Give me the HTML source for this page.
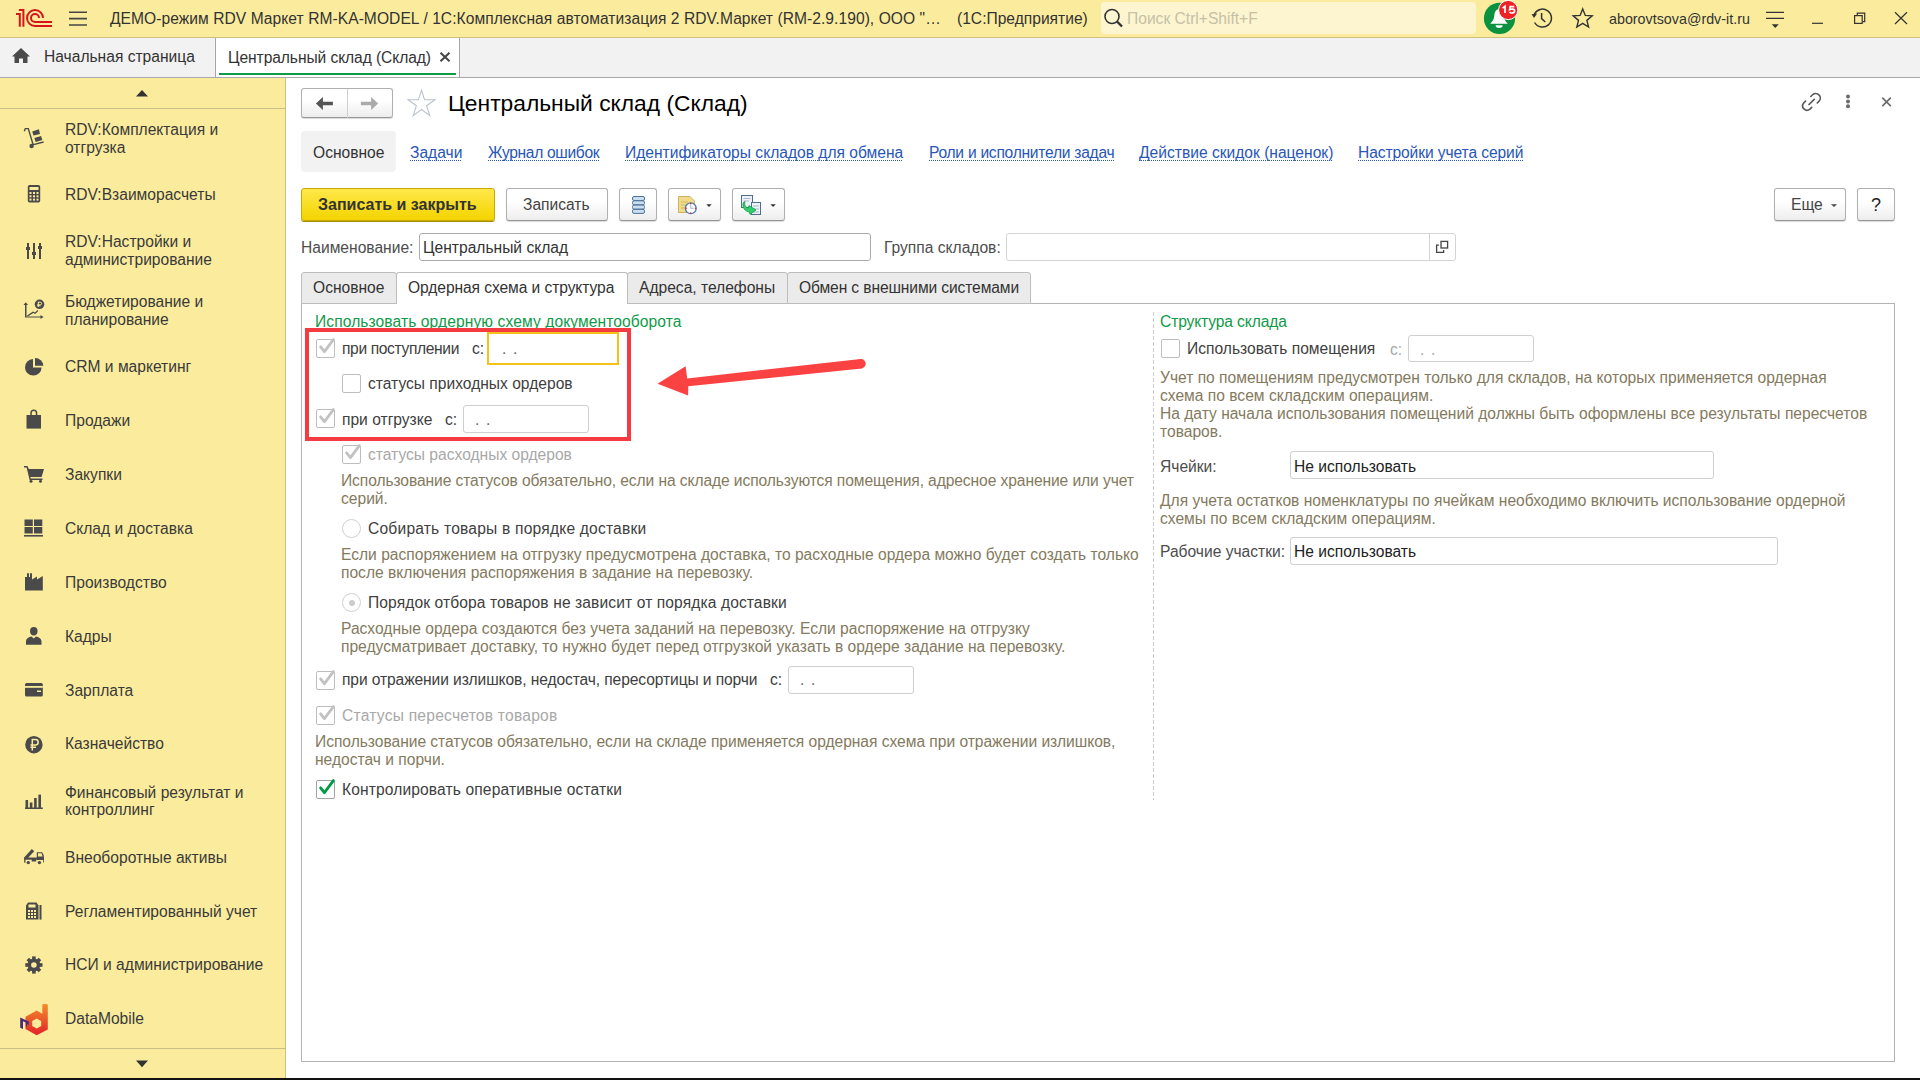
<!DOCTYPE html>
<html><head><meta charset="utf-8"><title>1C</title>
<style>
*{margin:0;padding:0;box-sizing:border-box}
html,body{width:1920px;height:1080px;overflow:hidden;background:#fff}
body{position:relative;font-family:"Liberation Sans",sans-serif;font-size:15.6px;line-height:18px;color:#404040}
.a{position:absolute}
.t{position:absolute;white-space:nowrap;line-height:18px}
svg{position:absolute;overflow:visible}
.side{color:#3a3a3a}
.hint{color:#847a5e}
.grn{color:#0f9a48}
.lnk{color:#2856b6;background-image:repeating-linear-gradient(90deg,#2856b6 0 1px,transparent 1px 2px);background-repeat:no-repeat;background-size:100% 1px;background-position:0 16px}
.dis{color:#a8a8a8}
.btn{position:absolute;border:1px solid #b0b0b0;border-bottom-color:#959595;border-radius:3px;background:linear-gradient(#ffffff 0%,#ffffff 40%,#ededed 100%);box-shadow:0 1px 1px rgba(0,0,0,0.15)}
.fld{position:absolute;border:1px solid #cfcfcf;border-radius:3px;background:#fff}
.cb{position:absolute;width:19px;height:19px;border:1px solid #c4c4c4;border-radius:2px;background:#fff}
</style></head><body>
<div class="a" style="left:0px;top:0px;width:1920px;height:37px;background:#fbec9d"></div>
<div class="a" style="left:0px;top:37px;width:1920px;height:1px;background:#cdbf7c"></div>
<svg style="left:0;top:0" width="60" height="36"><g fill="none" stroke="#d7141a" stroke-width="2">
<path d="M16 14H19.8V26.8"/><path d="M18.9 10.1H23.4V26.8"/>
<path d="M43 18A8 8 0 1 0 35 26H52"/><path d="M39 18A4 4 0 1 0 35 22H52"/></g></svg>
<svg style="left:0;top:0" width="100" height="36"><g stroke="#444" stroke-width="1.6"><path d="M69 12.2H87M69 18.6H87M69 25H87"/></g></svg>
<div class="t " style="left:110.0px;top:9.59px;letter-spacing:0.05px;color:#333">ДЕМО-режим RDV Маркет RM-KA-MODEL / 1С:Комплексная автоматизация 2 RDV.Маркет (RM-2.9.190), ООО "…</div>
<div class="t " style="left:957.0px;top:9.59px;color:#333">(1С:Предприятие)</div>
<div class="a" style="left:1101px;top:2px;width:375px;height:32px;background:#fdf5cf;border-radius:4px"></div>
<svg style="left:0;top:0" width="1200" height="36"><g fill="none" stroke="#333" stroke-width="1.6"><circle cx="1112" cy="16.5" r="7"/><path d="M1117 21.5L1122 26.5" stroke-width="2.4"/></g></svg>
<div class="t " style="left:1127.0px;top:9.59px;color:#c6c0a8">Поиск Ctrl+Shift+F</div>
<svg style="left:0;top:0" width="1920" height="36">
<circle cx="1499.5" cy="18.4" r="15.6" fill="#0b9240"/>
<path d="M1499 9.3C1495.6 9.3 1494.6 12.3 1494.3 15.8C1494 19 1492.6 21.6 1490.2 23.8H1507.8C1505.4 21.6 1504 19 1503.7 15.8C1503.4 12.3 1502.4 9.3 1499 9.3Z" fill="#fff"/>
<path d="M1495.6 25.3H1502.6A3.5 2.6 0 0 1 1495.6 25.3Z" fill="#fff"/>
<circle cx="1508.2" cy="10" r="9.6" fill="#ee2326" stroke="#fff" stroke-width="1"/>
<g fill="none" stroke="#333" stroke-width="1.5">
<path d="M1534.6 22.5A9 9 0 1 0 1534.2 14.5"/>
<path d="M1541.6 13.1V18.6L1545.3 22"/>
<path d="M1582.70 9.00L1585.29 15.44L1592.21 15.91L1586.88 20.36L1588.58 27.09L1582.70 23.40L1576.82 27.09L1578.52 20.36L1573.19 15.91L1580.11 15.44Z" stroke-linejoin="miter" stroke-width="1.4"/>
</g>
<path d="M1531.6 14.2L1537.2 13.6L1534 18Z" fill="#333"/>
<g stroke="#333" stroke-width="1.2" fill="none">
<path d="M1766 12.3H1784M1766 18.3H1784"/>
<path d="M1812 23.3H1823"/>
<path d="M1857.3 15V13.2H1864.7V21.6H1862.7"/>
<rect x="1854.6" y="15.6" width="7.6" height="7.8"/>
<path d="M1895 12.2L1907 24M1907 12.2L1895 24"/>
</g>
<path d="M1771.7 24.2H1778.8L1775.25 27.9Z" fill="#333"/>
</svg>
<svg style="left:0;top:0" width="1" height="1"><g fill="none" stroke="#fff" stroke-width="1.7"><path d="M1502.6 8.2L1505 6.3V13"/><path d="M1514.3 6.7H1510.2L1509.7 9.6C1510.8 9 1514.6 8.7 1514.6 11C1514.6 13.4 1510.8 13.5 1509.5 12"/></g></svg>
<div class="t " style="left:1609.0px;top:11.05px;font-size:14.3px;line-height:16px;color:#333">aborovtsova@rdv-it.ru</div>
<div class="a" style="left:0px;top:38px;width:1920px;height:39px;background:#f2f2f2"></div>
<div class="a" style="left:0px;top:77px;width:1920px;height:1px;background:#a9a9a9"></div>
<div class="a" style="left:215px;top:38px;width:245px;height:39px;background:#fff;border-left:1px solid #a6a6a6;border-right:1px solid #a6a6a6"></div>
<div class="a" style="left:219px;top:73px;width:237px;height:2px;background:#0f9a48"></div>
<svg style="left:0;top:0" width="40" height="80"><path d="M21 48L12 56.5H14.5V63H19V58.5H23V63H27.5V56.5H30Z" fill="#4a4a4a"/></svg>
<div class="t " style="left:44.0px;top:48.09px;color:#333">Начальная страница</div>
<div class="t " style="left:228.0px;top:48.59px;letter-spacing:-0.08px;color:#333">Центральный склад (Склад)</div>
<svg style="left:0;top:0" width="480" height="80"><path d="M440.5 52.7L449.5 61.2M449.5 52.7L440.5 61.2" stroke="#444" stroke-width="2"/></svg>
<div class="a" style="left:0px;top:78px;width:285px;height:1000px;background:#fbec9d"></div>
<div class="a" style="left:285px;top:78px;width:1px;height:1000px;background:#cbbf86"></div>
<div class="a" style="left:0px;top:108px;width:285px;height:1px;background:#c9be88"></div>
<div class="a" style="left:0px;top:1048px;width:285px;height:1px;background:#c9be88"></div>
<svg style="left:0;top:0" width="290" height="1080"><path d="M136 96.5H148L142 90Z" fill="#333"/><path d="M136 1060.5H148L142 1067.3Z" fill="#333"/></svg>
<div class="t side" style="left:65.0px;top:121.09px;">RDV:Комплектация и</div>
<div class="t side" style="left:65.0px;top:138.89px;">отгрузка</div>
<div class="t side" style="left:65.0px;top:185.89px;">RDV:Взаиморасчеты</div>
<div class="t side" style="left:65.0px;top:233.49px;">RDV:Настройки и</div>
<div class="t side" style="left:65.0px;top:251.29px;">администрирование</div>
<div class="t side" style="left:65.0px;top:293.19px;">Бюджетирование и</div>
<div class="t side" style="left:65.0px;top:310.99px;">планирование</div>
<div class="t side" style="left:65.0px;top:357.99px;">CRM и маркетинг</div>
<div class="t side" style="left:65.0px;top:411.59px;">Продажи</div>
<div class="t side" style="left:65.0px;top:465.59px;">Закупки</div>
<div class="t side" style="left:65.0px;top:519.59px;">Склад и доставка</div>
<div class="t side" style="left:65.0px;top:573.59px;">Производство</div>
<div class="t side" style="left:65.0px;top:627.59px;">Кадры</div>
<div class="t side" style="left:65.0px;top:681.59px;">Зарплата</div>
<div class="t side" style="left:65.0px;top:735.39px;">Казначейство</div>
<div class="t side" style="left:65.0px;top:783.59px;">Финансовый результат и</div>
<div class="t side" style="left:65.0px;top:801.39px;">контроллинг</div>
<div class="t side" style="left:65.0px;top:848.59px;">Внеоборотные активы</div>
<div class="t side" style="left:65.0px;top:902.59px;">Регламентированный учет</div>
<div class="t side" style="left:65.0px;top:956.09px;">НСИ и администрирование</div>
<div class="t side" style="left:65.0px;top:1009.99px;">DataMobile</div>
<svg style="left:0;top:0" width="290" height="1080"><g fill="#4a4a4a">
<!-- hand truck -->
<path d="M24.3 131.2L25.3 128.6H28.3L33.3 145.2M33.5 144.6L43.6 142" fill="none" stroke="#4a4a4a" stroke-width="1.4"/>
<circle cx="31.6" cy="146" r="2.2"/>
<path d="M32.2 131.6L38.9 129.2L40 133.9L33.5 135.6Z"/>
<path d="M34.4 138.1L41.1 136L42.3 140.1L35.7 141.9Z"/>
<!-- calculator -->
<path d="M29.6 185H38.4A1.8 1.8 0 0 1 40.2 186.8V200.8A1.8 1.8 0 0 1 38.4 202.6H29.6A1.8 1.8 0 0 1 27.8 200.8V186.8A1.8 1.8 0 0 1 29.6 185Z"/>
</g>
<g fill="#fbec9d"><rect x="29.5" y="187" width="9" height="3"/>
<rect x="29.5" y="192" width="2" height="2"/><rect x="33" y="192" width="2" height="2"/><rect x="36.5" y="192" width="2" height="2"/>
<rect x="29.5" y="195.3" width="2" height="2"/><rect x="33" y="195.3" width="2" height="2"/><rect x="36.5" y="195.3" width="2" height="2"/>
<rect x="29.5" y="198.6" width="2" height="2"/><rect x="33" y="198.6" width="2" height="2"/><rect x="36.5" y="198.6" width="2" height="2"/></g>
<g fill="#4a4a4a">
<!-- sliders -->
<rect x="27" y="243" width="2" height="16"/><rect x="33" y="243" width="2" height="16"/><rect x="39" y="243" width="2" height="16"/>
<rect x="26" y="247" width="4" height="3"/><rect x="32" y="252" width="4" height="3"/><rect x="38" y="246" width="4" height="3"/>
<!-- budget -->
<path d="M25.5 302.5L23.5 305H25V317.5H40.5V319L43.5 317L40.5 315V316.5H26.5V305H28L26 302.5Z"/>
<path d="M27 315.5L33 311.5L35 312.5L37.5 310L38.3 311L35.2 314L33.2 313L27.8 316.6Z"/>
<circle cx="39.5" cy="304.3" r="4.8"/>
</g>
<path d="M38.3 301.8V306.8M38.3 302.2H40.3A1.3 1.3 0 0 1 40.3 304.8H37.2M37.2 305.8H40.5" stroke="#fbec9d" stroke-width="1" fill="none"/>
<g fill="#4a4a4a">
<!-- pie -->
<path d="M33 359A8.3 8.3 0 1 0 41.6 367.5H33Z"/>
<path d="M35 358A8.3 8.3 0 0 1 43.4 365.8H35Z"/>
<!-- bag -->
<path d="M26.5 415H41V428.6H26.5Z"/>
<path d="M30.3 415.5V413A3.5 3.5 0 0 1 37.3 413V415.5H35.8V413A2 2 0 0 0 31.8 413V415.5Z"/>
<!-- cart -->
<path d="M24 466H27.5L28.8 469H44L41.6 477H30.3L30.8 478.5H42.5V480H29.6L26.6 467.5H24Z"/>
<circle cx="31" cy="481.3" r="1.5"/><circle cx="40.5" cy="481.3" r="1.5"/>
<!-- warehouse -->
<rect x="24.5" y="519.5" width="8.3" height="6.5"/><rect x="34" y="519.5" width="8.3" height="6.5"/>
<rect x="24.5" y="527" width="8.3" height="6.5"/><rect x="34" y="527" width="8.3" height="6.5"/>
<rect x="24" y="535" width="19" height="1.6"/>
<!-- factory -->
<path d="M25 590.6V577H27V573.2H29V577H30V573.2H32V579.5L37 576.5V579.5L42.8 576V590.6Z"/>
<!-- person -->
<path d="M33.8 627A3.8 4.3 0 0 1 37.6 631.3C37.6 633.8 36.2 635.5 33.8 635.5C31.4 635.5 30 633.8 30 631.3A3.8 4.3 0 0 1 33.8 627Z"/>
<path d="M26 644.8V641.5C26 638.5 29 637 31.5 636.5L33.8 638.5L36 636.5C38.5 637 41.5 638.5 41.5 641.5V644.8Z"/>
<!-- card -->
<path d="M26.5 683H41.3A1.5 1.5 0 0 1 42.8 684.5V695.1A1.5 1.5 0 0 1 41.3 696.6H26.5A1.5 1.5 0 0 1 25 695.1V684.5A1.5 1.5 0 0 1 26.5 683Z"/>
</g>
<rect x="25" y="686" width="17.8" height="1.8" fill="#fbec9d"/><rect x="37" y="690.5" width="4" height="1.5" fill="#fbec9d"/>
<g fill="#4a4a4a">
<!-- ruble -->
<circle cx="33.9" cy="744.7" r="8.7"/>
</g>
<path d="M32.3 750.5V739.5H35.5A2.7 2.7 0 0 1 35.5 744.9H30.5M30.5 747.3H36" stroke="#fbec9d" stroke-width="1.5" fill="none"/>
<g fill="#4a4a4a">
<!-- bars -->
<rect x="25.5" y="800" width="2.6" height="8"/><rect x="29.8" y="802.5" width="2.6" height="5.5"/><rect x="34.1" y="798" width="2.6" height="10"/><rect x="38.4" y="794.6" width="2.6" height="13.4"/>
<rect x="25" y="807.5" width="17.8" height="1.5"/>
<!-- tow truck -->
<path d="M25.8 858L33 850.2" stroke="#4a4a4a" stroke-width="3.2"/>
<rect x="24.2" y="857.2" width="1.3" height="5.5"/>
<path d="M36.8 860V852.2H42.2L43.8 855.5V860Z"/><path d="M38 853.3H41.5L42.6 856.5H38Z" fill="#fbec9d"/><rect x="43" y="857" width="0.8" height="5.5"/>
<rect x="24.2" y="857.5" width="19.6" height="2.2"/>
<rect x="31.7" y="858.5" width="4.5" height="3"/>
<circle cx="28.3" cy="862.6" r="1.7"/><circle cx="39.4" cy="862.6" r="1.7"/>
<!-- register -->
<path d="M28 902.5H36.5L38.5 905.5V919.6H26V905.5Z"/>
<rect x="39.5" y="905" width="2" height="14.6"/>
</g>
<g fill="#fbec9d"><rect x="28.5" y="904.5" width="7" height="3"/>
<rect x="28" y="910" width="2" height="2"/><rect x="31" y="910" width="2" height="2"/><rect x="34" y="910" width="2" height="2"/>
<rect x="28" y="913" width="2" height="2"/><rect x="31" y="913" width="2" height="2"/><rect x="34" y="913" width="2" height="2"/>
<rect x="28" y="916" width="2" height="2"/><rect x="31" y="916" width="2" height="2"/><rect x="34" y="916" width="2" height="2"/></g>
<!-- gear -->
<g transform="translate(33.9 965)">
<circle r="6.4" fill="#4a4a4a"/>
<g fill="#4a4a4a"><rect x="-1.8" y="-8.6" width="3.6" height="17.2"/><rect x="-1.8" y="-8.6" width="3.6" height="17.2" transform="rotate(45)"/><rect x="-1.8" y="-8.6" width="3.6" height="17.2" transform="rotate(90)"/><rect x="-1.8" y="-8.6" width="3.6" height="17.2" transform="rotate(135)"/></g>
<circle r="2.8" fill="#fbec9d"/>
</g>
<!-- DataMobile -->
<defs><linearGradient id="dmg" x1="0" y1="0" x2="0" y2="1"><stop offset="0" stop-color="#f38f2a"/><stop offset="1" stop-color="#e22229"/></linearGradient></defs>
<path d="M42.3 1005.3Q42.3 1004 43.5 1004L46.5 1004Q47.8 1004 47.8 1005.3V1029.6L36.7 1035.3L25.5 1029V1016.8L36.7 1010.6L42.3 1013.8Z" fill="url(#dmg)"/>
<path d="M36.7 1018.5L41.2 1021V1026L36.7 1028.5L32.2 1026V1021Z" fill="#fbec9d"/>
<path d="M20.2 1017.5L28.8 1021.5V1025L27 1024.3V1027L25.8 1026.5V1022.5L23 1021.3V1029L20.2 1027.8Z" fill="#4b2a7a"/>
</svg>
<div class="btn" style="left:301px;top:88px;width:92px;height:30px"></div>
<div class="a" style="left:347px;top:89px;width:1px;height:29px;background:#d0d0d0"></div>
<svg style="left:0;top:0" width="460" height="130">
<path d="M315.9 103.4L322.9 96.9V101.8H332.9V105.3H322.9V110Z" fill="#555"/>
<path d="M378.1 103.4L371.1 96.9V101.8H360.9V105.3H371.1V110Z" fill="#aaa"/>
<path d="M421.5 90.2L424.6 99.8H434.9L426.6 105.8L429.8 115.6L421.5 109.5L413.2 115.6L416.4 105.8L408.1 99.8H418.4Z" fill="none" stroke="#b9c2cc" stroke-width="1.1"/>
</svg>
<div class="t " style="left:448.0px;top:90.40px;font-size:22.8px;line-height:26px;color:#000">Центральный склад (Склад)</div>
<svg style="left:0;top:0" width="1920" height="130">
<g fill="none" stroke="#5a5a5a" stroke-width="1.7" stroke-linecap="round">
<path d="M1810.8 96.5L1812.55 94.75A4.6 4.6 0 0 1 1819.05 101.25L1817.3 103"/>
<path d="M1805.5 101.2L1803.7 103A4.4 4.4 0 0 0 1809.9 109.2L1811.7 107.4"/>
<path d="M1809 104.5L1814.2 99.3"/>
</g>
<circle cx="1848" cy="96.6" r="2" fill="#6a6a6a"/><circle cx="1848" cy="101.5" r="2" fill="#6a6a6a"/><circle cx="1848" cy="106.3" r="2" fill="#6a6a6a"/>
<path d="M1882.3 97.6L1890.8 106.1M1890.8 97.6L1882.3 106.1" stroke="#6a6a6a" stroke-width="1.6"/>
</svg>
<div class="a" style="left:301px;top:131px;width:95px;height:41px;background:#f2f2f2;border-radius:4px"></div>
<div class="t " style="left:313.0px;top:143.99px;color:#333">Основное</div>
<div class="t lnk" style="left:410.0px;top:143.99px;letter-spacing:0px;">Задачи</div>
<div class="t lnk" style="left:488.0px;top:143.99px;letter-spacing:-0.33px;">Журнал ошибок</div>
<div class="t lnk" style="left:625.0px;top:143.99px;letter-spacing:0px;">Идентификаторы складов для обмена</div>
<div class="t lnk" style="left:929.0px;top:143.99px;letter-spacing:-0.26px;">Роли и исполнители задач</div>
<div class="t lnk" style="left:1139.0px;top:143.99px;letter-spacing:0px;">Действие скидок (наценок)</div>
<div class="t lnk" style="left:1358.0px;top:143.99px;letter-spacing:-0.1px;">Настройки учета серий</div>
<div class="a" style="left:301px;top:188px;width:194px;height:33px;border:1px solid #c9a800;border-radius:3px;background:linear-gradient(#ffe84a,#f3d400);box-shadow:0 1px 0 #a89000"></div>
<div class="t " style="left:318.0px;top:195.96px;font-size:16px;line-height:18px;font-weight:bold;color:#333;line-height:18px">Записать и закрыть</div>
<div class="btn" style="left:506px;top:188px;width:102px;height:33px"></div>
<div class="t " style="left:523.0px;top:196.09px;color:#444">Записать</div>
<div class="btn" style="left:619px;top:188px;width:38px;height:33px"></div>
<div class="btn" style="left:668px;top:188px;width:53px;height:33px"></div>
<div class="btn" style="left:732px;top:188px;width:53px;height:33px"></div>
<div class="btn" style="left:1774px;top:188px;width:72px;height:33px"></div>
<div class="t " style="left:1791.0px;top:196.09px;color:#444">Еще</div>
<div class="btn" style="left:1857px;top:188px;width:38px;height:33px"></div>
<div class="t " style="left:1871.0px;top:195.26px;font-size:18px;line-height:21px;color:#222">?</div>
<svg style="left:0;top:0" width="1920" height="230">
<g stroke="#4d7394" stroke-width="1" fill="#c9def0">
<rect x="632.5" y="196.5" width="12" height="4" rx="1.5"/><rect x="632.5" y="200.8" width="12" height="4" rx="1.5"/>
<rect x="632.5" y="205.1" width="12" height="4" rx="1.5"/><rect x="632.5" y="209.4" width="12" height="4" rx="1.5"/>
</g>
<path d="M678.5 196.5H690L694.5 201V212.5H678.5Z" fill="#f0db8a" stroke="#cdb35f"/>
<path d="M681 202H688M681 205H686M681 208H685" stroke="#c8ae5c" stroke-width="0.8"/>
<circle cx="690.8" cy="208.3" r="5.4" fill="#fff" stroke="#4f7bb0" stroke-width="1.3"/>
<path d="M690.8 208.3V204.5M690.8 208.3H693.5" stroke="#9bb3d6" stroke-width="1"/>
<g fill="#e02020"><circle cx="690.8" cy="203.6" r="0.8"/><circle cx="695.5" cy="208.3" r="0.8"/><circle cx="690.8" cy="213" r="0.8"/><circle cx="686.1" cy="208.3" r="0.8"/></g>
<path d="M706.3 204.2H711.7L709 207.1Z" fill="#333"/>
<rect x="741.5" y="195.5" width="11" height="12" fill="#eef2f7" stroke="#4f6f90"/>
<path d="M743.5 198.5H750.5M743.5 201H749" stroke="#9aaec4" stroke-width="0.8"/>
<rect x="751.5" y="202.5" width="9" height="12" fill="#eef2f7" stroke="#4f6f90"/>
<path d="M753 206H759M753 209H759M753 212H759" stroke="#9aaec4" stroke-width="0.8"/>
<path d="M745 201.5C744 205 745.5 207.5 748.5 208L749 205.5L756 210L750 214.5L749.5 212C745 211.5 742.5 208 743 203Z" fill="#2fcf6f" stroke="#1a9a4a" stroke-width="0.8"/>
<path d="M770.4 204.2H775.8L773.1 207.1Z" fill="#333"/>
<path d="M1831 204.2H1837L1834 207.1Z" fill="#444"/>
</svg>
<div class="t " style="left:301.0px;top:238.89px;color:#4d4d4d">Наименование:</div>
<div class="fld" style="left:419px;top:233px;width:452px;height:28px;border-color:#ababab"></div>
<div class="t " style="left:423.0px;top:238.89px;color:#333">Центральный склад</div>
<div class="t " style="left:884.0px;top:238.89px;color:#4d4d4d">Группа складов:</div>
<div class="fld" style="left:1006px;top:233px;width:450px;height:28px;border-color:#d4d4d4"></div>
<div class="a" style="left:1429px;top:234px;width:1px;height:26px;background:#d4d4d4"></div>
<svg style="left:0;top:0" width="1920" height="270"><g fill="none" stroke="#444" stroke-width="1.3">
<rect x="1441" y="241.4" width="6.6" height="6.6"/><path d="M1438.9 245.2H1436.6V252.3H1443.6V250"/></g></svg>
<div class="a" style="left:301px;top:303px;width:1594px;height:759px;border:1px solid #b3b3b3;background:#fff"></div>
<div class="a" style="left:301px;top:272px;width:96px;height:32px;background:#ebebeb;border:1px solid #bdbdbd;border-radius:3px 3px 0 0"></div>
<div class="a" style="left:396px;top:272px;width:232px;height:32px;background:#fff;border:1px solid #bdbdbd;border-bottom:none;border-radius:3px 3px 0 0"></div>
<div class="a" style="left:627px;top:272px;width:161px;height:32px;background:#ebebeb;border:1px solid #bdbdbd;border-radius:3px 3px 0 0"></div>
<div class="a" style="left:787px;top:272px;width:244px;height:32px;background:#ebebeb;border:1px solid #bdbdbd;border-radius:3px 3px 0 0"></div>
<div class="a" style="left:397px;top:302px;width:230px;height:2px;background:#fff"></div>
<div class="t " style="left:313.0px;top:279.09px;color:#333">Основное</div>
<div class="t " style="left:408.0px;top:279.09px;letter-spacing:-0.08px;color:#333">Ордерная схема и структура</div>
<div class="t " style="left:639.0px;top:279.09px;color:#333">Адреса, телефоны</div>
<div class="t " style="left:799.0px;top:279.09px;letter-spacing:-0.12px;color:#333">Обмен с внешними системами</div>
<div class="a" style="left:1153px;top:312px;width:1px;height:488px;background:repeating-linear-gradient(#cfcfcf 0 4px,transparent 4px 6px)"></div>
<div class="t grn" style="left:315.0px;top:313.29px;letter-spacing:0.09px;">Использовать ордерную схему документооборота</div>
<div class="cb" style="left:316px;top:339px;border-color:#bdbdbd"></div>
<svg style="left:0;top:0" width="1" height="1"><path d="M320.6 346.8L324.4 351.7L333.4 339.6" fill="none" stroke="#c2c2c2" stroke-width="2.8" stroke-linecap="round" stroke-linejoin="round"/></svg>
<div class="t " style="left:342.0px;top:340.09px;letter-spacing:-0.36px;">при поступлении</div>
<div class="t " style="left:472.0px;top:340.09px;">с:</div>
<div class="a" style="left:487px;top:332px;width:132px;height:33px;border:2px solid #f5c21b"></div>
<div class="t " style="left:502.0px;top:340.09px;letter-spacing:1.2px;color:#666">. .</div>
<div class="cb" style="left:342px;top:374px;border-color:#bdbdbd"></div>
<div class="t " style="left:368.0px;top:375.09px;">статусы приходных ордеров</div>
<div class="cb" style="left:316px;top:409px;border-color:#bdbdbd"></div>
<svg style="left:0;top:0" width="1" height="1"><path d="M320.6 416.8L324.4 421.7L333.4 409.6" fill="none" stroke="#c2c2c2" stroke-width="2.8" stroke-linecap="round" stroke-linejoin="round"/></svg>
<div class="t " style="left:342.0px;top:411.09px;">при отгрузке</div>
<div class="t " style="left:445.0px;top:411.09px;">с:</div>
<div class="fld" style="left:463px;top:405px;width:126px;height:28px"></div>
<div class="t " style="left:475.0px;top:411.09px;letter-spacing:1.2px;color:#666">. .</div>
<div class="cb" style="left:342px;top:445px;border-color:#bdbdbd"></div>
<svg style="left:0;top:0" width="1" height="1"><path d="M346.6 452.8L350.4 457.7L359.4 445.6" fill="none" stroke="#c2c2c2" stroke-width="2.8" stroke-linecap="round" stroke-linejoin="round"/></svg>
<div class="t dis" style="left:368.0px;top:446.09px;">статусы расходных ордеров</div>
<div class="t hint" style="left:341.0px;top:471.89px;letter-spacing:-0.09px;">Использование статусов обязательно, если на складе используются помещения, адресное хранение или учет</div>
<div class="t hint" style="left:341.0px;top:489.69px;">серий.</div>
<div class="a" style="left:342px;top:519px;width:19px;height:19px;border:1px solid #d0d0d0;border-radius:50%"></div>
<div class="t " style="left:368.0px;top:520.09px;letter-spacing:0.2px;">Собирать товары в порядке доставки</div>
<div class="t hint" style="left:341.0px;top:545.79px;">Если распоряжением на отгрузку предусмотрена доставка, то расходные ордера можно будет создать только</div>
<div class="t hint" style="left:341.0px;top:563.59px;">после включения распоряжения в задание на перевозку.</div>
<div class="a" style="left:342px;top:593px;width:19px;height:19px;border:1px solid #d0d0d0;border-radius:50%"></div>
<div class="a" style="left:348.6px;top:599.5px;width:6px;height:6px;background:#cccccc;border-radius:50%"></div>
<div class="t " style="left:368.0px;top:594.29px;letter-spacing:0.1px;">Порядок отбора товаров не зависит от порядка доставки</div>
<div class="t hint" style="left:341.0px;top:619.69px;">Расходные ордера создаются без учета заданий на перевозку. Если распоряжение на отгрузку</div>
<div class="t hint" style="left:341.0px;top:637.69px;">предусматривает доставку, то нужно будет перед отгрузкой указать в ордере задание на перевозку.</div>
<div class="cb" style="left:316px;top:671px;border-color:#bdbdbd"></div>
<svg style="left:0;top:0" width="1" height="1"><path d="M320.6 678.8L324.4 683.7L333.4 671.6" fill="none" stroke="#c2c2c2" stroke-width="2.8" stroke-linecap="round" stroke-linejoin="round"/></svg>
<div class="t " style="left:342.0px;top:671.39px;letter-spacing:-0.1px;">при отражении излишков, недостач, пересортицы и порчи</div>
<div class="t " style="left:770.0px;top:671.39px;">с:</div>
<div class="fld" style="left:788px;top:666px;width:126px;height:28px"></div>
<div class="t " style="left:800.0px;top:671.39px;letter-spacing:1.2px;color:#666">. .</div>
<div class="cb" style="left:316px;top:706px;border-color:#bdbdbd"></div>
<svg style="left:0;top:0" width="1" height="1"><path d="M320.6 713.8L324.4 718.7L333.4 706.6" fill="none" stroke="#c2c2c2" stroke-width="2.8" stroke-linecap="round" stroke-linejoin="round"/></svg>
<div class="t dis" style="left:342.0px;top:706.79px;letter-spacing:0.23px;">Статусы пересчетов товаров</div>
<div class="t hint" style="left:315.0px;top:733.29px;letter-spacing:-0.03px;">Использование статусов обязательно, если на складе применяется ордерная схема при отражении излишков,</div>
<div class="t hint" style="left:315.0px;top:750.99px;">недостач и порчи.</div>
<div class="cb" style="left:316px;top:780px;border-color:#a3a3a3"></div>
<svg style="left:0;top:0" width="1" height="1"><path d="M320.6 787.8L324.4 792.7L333.4 780.6" fill="none" stroke="#009a44" stroke-width="2.8" stroke-linecap="round" stroke-linejoin="round"/></svg>
<div class="t " style="left:342.0px;top:780.79px;letter-spacing:0.12px;">Контролировать оперативные остатки</div>
<div class="a" style="left:305px;top:328px;width:326px;height:113px;border:4px solid #f53b41"></div>
<svg style="left:0;top:0" width="1920" height="1080">
<path d="M657.5 383.8L685.6 366.2L687.2 378.5L860.6 359L861.8 368.6L688.3 386.3L688.1 395.6Z" fill="#fb4242"/>
<circle cx="861" cy="363.8" r="4.7" fill="#fb4242"/>
</svg>
<div class="t grn" style="left:1160.0px;top:313.09px;letter-spacing:-0.12px;">Структура склада</div>
<div class="cb" style="left:1161px;top:339px;border-color:#bdbdbd"></div>
<div class="t " style="left:1187.0px;top:339.89px;">Использовать помещения</div>
<div class="t dis" style="left:1390.0px;top:340.59px;">с:</div>
<div class="fld" style="left:1408px;top:335px;width:126px;height:27px"></div>
<div class="t dis" style="left:1420.0px;top:340.59px;letter-spacing:1.2px">. .</div>
<div class="t hint" style="left:1160.0px;top:369.09px;">Учет по помещениям предусмотрен только для складов, на которых применяется ордерная</div>
<div class="t hint" style="left:1160.0px;top:386.99px;">схема по всем складским операциям.</div>
<div class="t hint" style="left:1160.0px;top:404.99px;">На дату начала использования помещений должны быть оформлены все результаты пересчетов</div>
<div class="t hint" style="left:1160.0px;top:422.89px;">товаров.</div>
<div class="t " style="left:1160.0px;top:457.59px;color:#4d4d4d">Ячейки:</div>
<div class="fld" style="left:1290px;top:451px;width:424px;height:28px"></div>
<div class="t " style="left:1294.0px;top:457.59px;color:#222">Не использовать</div>
<div class="t hint" style="left:1160.0px;top:491.59px;">Для учета остатков номенклатуры по ячейкам необходимо включить использование ордерной</div>
<div class="t hint" style="left:1160.0px;top:509.59px;">схемы по всем складским операциям.</div>
<div class="t " style="left:1160.0px;top:543.29px;color:#4d4d4d">Рабочие участки:</div>
<div class="fld" style="left:1290px;top:537px;width:488px;height:28px"></div>
<div class="t " style="left:1294.0px;top:543.29px;color:#222">Не использовать</div>
<div class="a" style="left:0px;top:1078px;width:1920px;height:2px;background:#111"></div>
<!--MAIN-->
</body></html>
